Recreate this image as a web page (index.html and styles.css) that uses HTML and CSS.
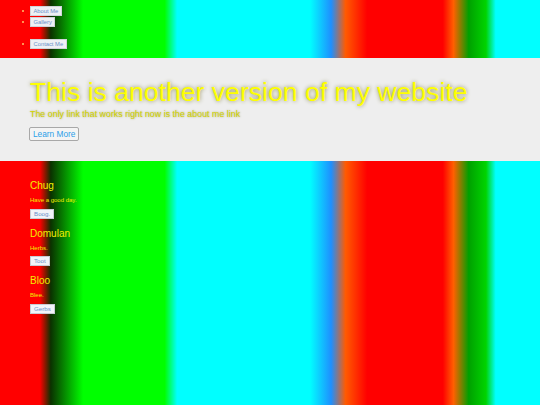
FILE: index.html
```html
<!DOCTYPE html>
<html>
<head>
<meta charset="utf-8">
<link rel="stylesheet" href="styles.css">
</head>
<body>
<ul class="nav">
  <li class="navitem"><a class="navbtn" href="#">About Me</a></li>
  <li class="navitem"><a class="navbtn" href="#">Gallery</a></li>
  <li class="spacer"></li>
  <li class="navitem"><a class="navbtn" href="#">Contact Me</a></li>
</ul>
<div class="jumbo">
  <h1 class="title">This is another version of my website</h1>
  <p class="sub">The only link that works right now is the about me link</p>
  <a class="learn" href="#">Learn More</a>
</div>
<div class="items">
  <div class="item">
    <h2 class="name">Chug</h2>
    <p class="desc">Have a good day.</p>
    <a class="smallbtn" href="#">Boog.</a>
  </div>
  <div class="item">
    <h2 class="name">Domulan</h2>
    <p class="desc">Herbs.</p>
    <a class="smallbtn" href="#">Toot</a>
  </div>
  <div class="item">
    <h2 class="name">Bloo</h2>
    <p class="desc">Blee.</p>
    <a class="smallbtn" href="#">Gerbs</a>
  </div>
</div>
</body>
</html>
```

FILE: styles.css
```css
html, body {
  margin: 0;
  padding: 0;
  height: 100%;
}
body {
  font-family: "Liberation Sans", Arial, sans-serif;
  background: linear-gradient(to right,
    #ff0000 0%, #ff0000 7.4%, #0a3200 9.4%, #00ff00 15.4%, #00ff00 30.5%,
    #00ffff 32.8%, #00ffff 57.4%, #1e90ff 61.3%, #ff5a00 64%, #ff0000 68%,
    #ff0000 82%, #ff6000 84%, #00a000 86.8%, #00d400 90%, #00ffff 91.8%, #00ffff 100%);
  overflow: hidden;
}
.nav {
  margin: 0;
  padding: 5px 0 0 22px;
  height: 58px;
  box-sizing: border-box;
  list-style: none;
}
.navitem, .spacer {
  display: flex;
  align-items: center;
  height: 11px;
}
.navitem::before {
  content: "";
  width: 2px;
  height: 2px;
  background: #ff9050;
  margin-right: 6px;
}
.navbtn {
  display: inline-block;
  box-sizing: border-box;
  height: 10px;
  background: #eef0f4;
  border: 1px solid #d0d4da;
  color: #6a90c8;
  text-decoration: none;
  padding: 0 2.5px;
  line-height: 8px;
  font-size: 5.8px;
}
.jumbo {
  background: #eeeeee;
  height: 103px;
  box-sizing: border-box;
  padding: 18px 30px 0;
  display: flex;
  flex-direction: column;
  align-items: flex-start;
}
.title {
  margin: 0;
  font-size: 26.6px;
  font-weight: normal;
  line-height: 32px;
  color: #ffff00;
  text-shadow: 0 0 4px #8a8a50;
}
.sub {
  margin: 0 0 7px;
  font-size: 8.9px;
  line-height: 12px;
  color: #d4d400;
  text-shadow: 0 0 2px #a0a070;
}
.learn {
  display: block;
  box-sizing: border-box;
  height: 14px;
  font-size: 8.3px;
  line-height: 12px;
  padding: 0 3px;
  margin-left: -1px;
  color: #2aa0e8;
  background: #f4f4f4;
  border: 1px solid #a8a8a8;
  border-radius: 2px;
  text-decoration: none;
}
.items {
  padding: 19px 30px 0;
}
.item {
  height: 47.5px;
  display: flex;
  flex-direction: column;
  align-items: flex-start;
}
.name {
  margin: 0;
  font-size: 10px;
  font-weight: normal;
  line-height: 12px;
  color: #f2f000;
}
.desc {
  margin: 4px 0 4.5px;
  font-size: 6px;
  line-height: 8px;
  color: #f0f000;
}
.smallbtn {
  display: block;
  box-sizing: border-box;
  height: 10px;
  font-size: 6.2px;
  line-height: 8px;
  padding: 0 3px;
  background: #f2f4f8;
  border: 1px solid #c8ccd4;
  color: #6a90c8;
  text-decoration: none;
}
```
